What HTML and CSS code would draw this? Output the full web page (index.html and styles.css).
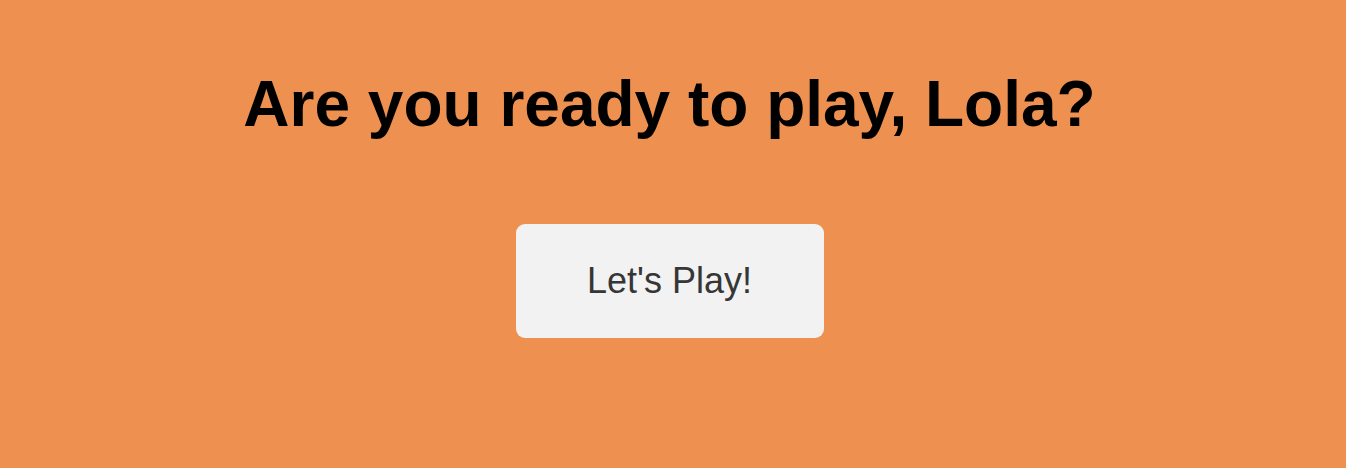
FILE: index.html
```html
<!DOCTYPE html>
<html lang="en">
<head>
<meta charset="utf-8">
<title>Are you ready to play?</title>
<link rel="stylesheet" href="styles.css">
</head>
<body>
<main class="screen">
  <h1 class="title">Are you ready to play, Lola?</h1>
  <button class="play-btn" type="button">Let's Play!</button>
</main>
</body>
</html>
```
FILE: styles.css
```css
html, body {
  margin: 0;
  padding: 0;
  height: 100%;
}
body {
  background: #ee9050;
  font-family: "Liberation Sans", Arial, Helvetica, sans-serif;
}
.screen {
  display: flex;
  flex-direction: column;
  align-items: center;
  padding-top: 66px;
  padding-right: 7px;
}
.title {
  margin: 0;
  font-size: 64px;
  font-weight: 700;
  line-height: 76px;
  color: #000;
}
.play-btn {
  margin-top: 82px;
  width: 308px;
  height: 114px;
  border: none;
  border-radius: 9px;
  background: #f2f2f2;
  color: #363636;
  font-family: "Liberation Sans", Arial, Helvetica, sans-serif;
  font-size: 36px;
  cursor: pointer;
}
```
